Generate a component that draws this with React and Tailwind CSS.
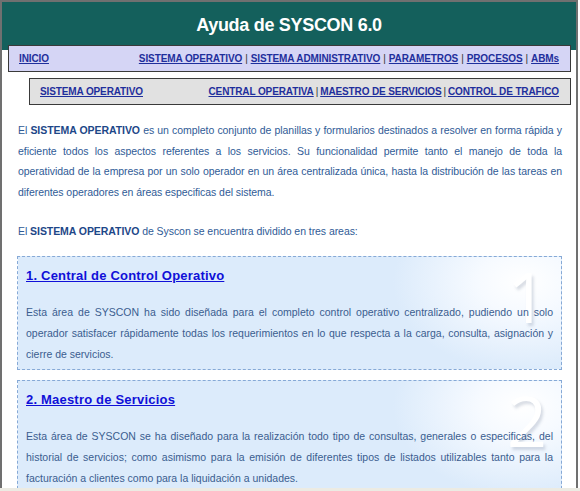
import React from "react";

const sans = "font-['Liberation_Sans',Arial,sans-serif]";

function NavLinks({ items, sep }) {
  return (
    <div className="flex items-center">
      {items.map((t, i) => (
        <React.Fragment key={t}>
          {i > 0 && <span className={`${sep} text-[#333] font-normal`}>|</span>}
          <a className="underline text-[#1f2f9c]">{t}</a>
        </React.Fragment>
      ))}
    </div>
  );
}

function Area({ num, title, children, mt }) {
  return (
    <div
      className={`relative ${mt} border border-dashed border-[#86a9d6] bg-[#dcebfb] bg-[radial-gradient(ellipse_130px_90px_at_93%_22%,#ffffff_0%,#f6faff_35%,#dcebfb_100%)] pl-[8px] pr-[8px] pt-[10px] pb-[5px]`}
    >
      <div className="absolute right-[14px] top-[4px] font-['Open_Sans',Lato,sans-serif] font-normal text-[70px] leading-none text-white [text-shadow:2px_3px_3px_rgba(80,100,130,0.22)] select-none">
        {num}
      </div>
      <a className="relative block text-[13px] leading-[18px] font-bold underline text-[#1010d8] tracking-[0.2px]">
        {title}
      </a>
      <p className="relative mt-[17px] text-[10.5px] leading-[20.67px] text-[#3a5d8f] text-justify tracking-[0px]">
        {children}
      </p>
    </div>
  );
}

export default function App() {
  return (
    <div className={`w-[580px] h-[491px] overflow-hidden bg-white ${sans}`}>
      <div className="w-[578px] h-[488px] overflow-hidden border-x-2 border-t-2 border-[#707070]">
        <div className="h-[48px] bg-[#14605c] flex items-center justify-center pb-[2px]">
          <h1 className="text-white font-bold text-[18px] tracking-[-0.3px]">Ayuda de SYSCON 6.0</h1>
        </div>
        <div className="ml-[6px] -mt-[5px] w-[563px] h-[27px] border border-[#3a3a3a] bg-[#d5d5f5] flex items-center justify-between pl-[10px] pr-[11px] text-[10px] font-bold tracking-[-0.1px]">
          <a className="underline text-[#1f2f9c]">INICIO</a>
          <NavLinks sep="px-[3px]" items={["SISTEMA OPERATIVO", "SISTEMA ADMINISTRATIVO", "PARAMETROS", "PROCESOS", "ABMs"]} />
        </div>
        <div className="ml-[27px] mt-[6px] w-[542px] h-[27px] border border-[#3a3a3a] bg-[#e1e1e1] flex items-center justify-between pl-[10px] pr-[11px] text-[10px] font-bold tracking-[-0.12px]">
          <a className="underline text-[#1f2f9c]">SISTEMA OPERATIVO</a>
          <NavLinks sep="px-[2px]" items={["CENTRAL OPERATIVA", "MAESTRO DE SERVICIOS", "CONTROL DE TRAFICO"]} />
        </div>
        <div className="pl-[16px] pr-[14px] mt-[15px]">
          <p className="text-[10.5px] leading-[20.67px] text-[#2f5b96] text-justify tracking-[-0.06px]">
            El <b className="text-[#1d4788]">SISTEMA OPERATIVO</b> es un completo conjunto de planillas y formularios destinados a resolver en forma rápida y eficiente todos los aspectos referentes a los servicios. Su funcionalidad permite tanto el manejo de toda la operatividad de la empresa por un solo operador en un área centralizada única, hasta la distribución de las tareas en diferentes operadores en áreas especificas del sistema.
          </p>
          <p className="mt-[18px] text-[10.5px] leading-[20.67px] text-[#2f5b96] tracking-[-0.06px]">
            El <b className="text-[#1d4788]">SISTEMA OPERATIVO</b> de Syscon se encuentra dividido en tres areas:
          </p>
          <div className="-ml-[1px]">
            <Area num="1" title="1. Central de Control Operativo" mt="mt-[15px]">
              Esta área de SYSCON ha sido diseñada para el completo control operativo centralizado, pudiendo un solo operador satisfacer rápidamente todas los requerimientos en lo que respecta a la carga, consulta, asignación y cierre de servicios.
            </Area>
            <Area num="2" title="2. Maestro de Servicios" mt="mt-[10px]">
              Esta área de SYSCON se ha diseñado para la realización todo tipo de consultas, generales o especificas, del historial de servicios; como asimismo para la emisión de diferentes tipos de listados utilizables tanto para la facturación a clientes como para la liquidación a unidades.
            </Area>
          </div>
        </div>
      </div>
      <div className="h-[3px] bg-[#ecebe3]" />
    </div>
  );
}
